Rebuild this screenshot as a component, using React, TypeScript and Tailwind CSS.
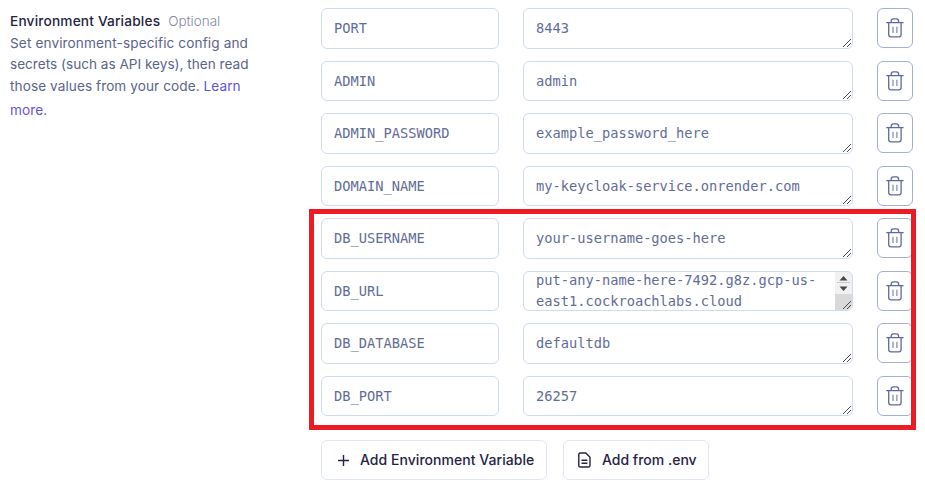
import React from "react";

const variables = [
  { name: "PORT", value: "8443" },
  { name: "ADMIN", value: "admin" },
  { name: "ADMIN_PASSWORD", value: "example_password_here" },
  { name: "DOMAIN_NAME", value: "my-keycloak-service.onrender.com" },
  { name: "DB_USERNAME", value: "your-username-goes-here" },
  { name: "DB_URL", value: "put-any-name-here-7492.g8z.gcp-us-east1.cockroachlabs.cloud", scroll: true },
  { name: "DB_DATABASE", value: "defaultdb" },
  { name: "DB_PORT", value: "26257" },
];

function TrashIcon() {
  return (
    <svg width="18" height="20" viewBox="0 0 18 20" fill="none" stroke="#5f6a9c" strokeWidth="1.3">
      <path d="M0.3 4.6H17.6" />
      <path d="M5.2 4.6V3.2Q5.2 0.9 7.3 0.9H10.5Q12.6 0.9 12.6 3.2V4.6" />
      <path d="M2.7 4.6V16.6Q2.7 18.9 5 18.9H12.8Q15.1 18.9 15.1 16.6V4.6" />
      <path d="M7 8.8V14.9M10.9 8.8V14.9" stroke="#8790b8" />
    </svg>
  );
}

function ResizeGrip() {
  return (
    <svg className="absolute right-0 bottom-px" width="9" height="9" viewBox="0 0 9 9" fill="#4a4a4a" shapeRendering="crispEdges">
      {[0, 1, 2, 3, 4, 5, 6, 7].map((i) => (
        <rect key={i} x={i} y={8 - i} width="1" height="1" />
      ))}
      {[4, 5, 6, 7].map((i) => (
        <rect key={i} x={i} y={12 - i} width="1" height="1" />
      ))}
    </svg>
  );
}

function Scrollbar() {
  return (
    <div className="absolute top-0 right-0 h-full w-[17px] overflow-hidden rounded-r-[5px] bg-[#d9d9d9]">
      <svg className="block" width="17" height="22" viewBox="0 0 17 22">
        <path d="M0 0H17V22H0Z" fill="#f1f1f1" />
        <path d="M2 10.5H15" stroke="#c9c9c9" />
        <path d="M4.5 8.5L8.5 4L12.5 8.5ZM4.5 14.5L8.5 19L12.5 14.5Z" fill="#484848" />
      </svg>
    </div>
  );
}

const mono = "font-['DejaVu_Sans_Mono',monospace] text-[13.7px] leading-5 text-[#636c98]";

export default function App() {
  return (
    <main className="relative flex h-[504px] w-[925px] overflow-hidden bg-white font-[Inter,sans-serif] text-[14px]">
      <section className="w-[321px] shrink-0 pt-[9px] pl-[10px] text-[#5b6489]">
        <div className="flex h-6 items-center gap-2 whitespace-nowrap">
          <h2 className="text-[13.7px] font-medium tracking-[0.17px] text-[#27233f]">Environment Variables</h2>
          <span className="text-[13.5px] font-light text-[#8587a8]">Optional</span>
        </div>
        <p className="text-[13.6px] leading-[21.4px] whitespace-nowrap">
          <span className="tracking-[0.12px]">Set environment-specific config and</span>
          <br />
          <span>secrets (such as API keys), then read</span>
          <br />
          <span className="tracking-[0.08px]">
            those values from your code. <a className="text-[#6152e5]">Learn</a>
          </span>
          <br />
          <span className="leading-[26.5px] tracking-[0.1px]"><a className="text-[#6152e5]">more</a>.</span>
        </p>
      </section>
      <section className="w-[592px] pt-2">
        <div className="flex flex-col gap-3">
          {variables.map((v) => (
            <div key={v.name} className="flex h-[40.5px] gap-6">
              <div className={`flex w-[178px] items-center rounded-md border border-[#cfdbf0] px-3 ${mono}`}>{v.name}</div>
              <div className={`relative w-[330px] overflow-hidden rounded-md border border-[#cfdbf0] px-3 ${mono}`}>
                {v.scroll ? (
                  <div className="-mt-[2px] w-[290px] leading-[21.5px]">{v.value}</div>
                ) : (
                  <div className="flex h-full items-center">{v.value}</div>
                )}
                {v.scroll && <Scrollbar />}
                <ResizeGrip />
              </div>
              <button className="flex h-10 w-9 items-center justify-center rounded-md border border-[#a5afd5]">
                <TrashIcon />
              </button>
            </div>
          ))}
        </div>
        <div className="mt-6 flex gap-4 text-[14px] font-medium text-[#27233f]">
          <button className="flex h-10 w-[226px] items-center rounded-md border border-[#dfe7f7] pl-4 whitespace-nowrap">
            <svg className="mr-[11px] shrink-0" width="11" height="11" viewBox="0 0 11 11" stroke="currentColor" strokeWidth="1.4">
              <path d="M5.5 0V11M0 5.5H11" />
            </svg>
            <span className="pb-px tracking-[0.04px]">Add Environment Variable</span>
          </button>
          <button className="flex h-10 w-[146px] items-center rounded-md border border-[#dfe7f7] pl-[14px] whitespace-nowrap">
            <svg className="mr-[11px] shrink-0" width="13" height="16" viewBox="0 0 13 16" fill="none" stroke="currentColor" strokeWidth="1.4" strokeLinejoin="round">
              <path d="M2.4 1H7.8L12 5.2V13.4Q12 15 10.4 15H2.4Q0.8 15 0.8 13.4V2.6Q0.8 1 2.4 1Z" />
              <path d="M3.5 8.2H9.4M3.5 11.2H9.4" />
            </svg>
            <span className="pb-px">Add from .env</span>
          </button>
        </div>
      </section>
      <div className="absolute top-[209px] left-[309px] h-[221px] w-[607px] border-[5px] border-[#ed1c24]" />
    </main>
  );
}
